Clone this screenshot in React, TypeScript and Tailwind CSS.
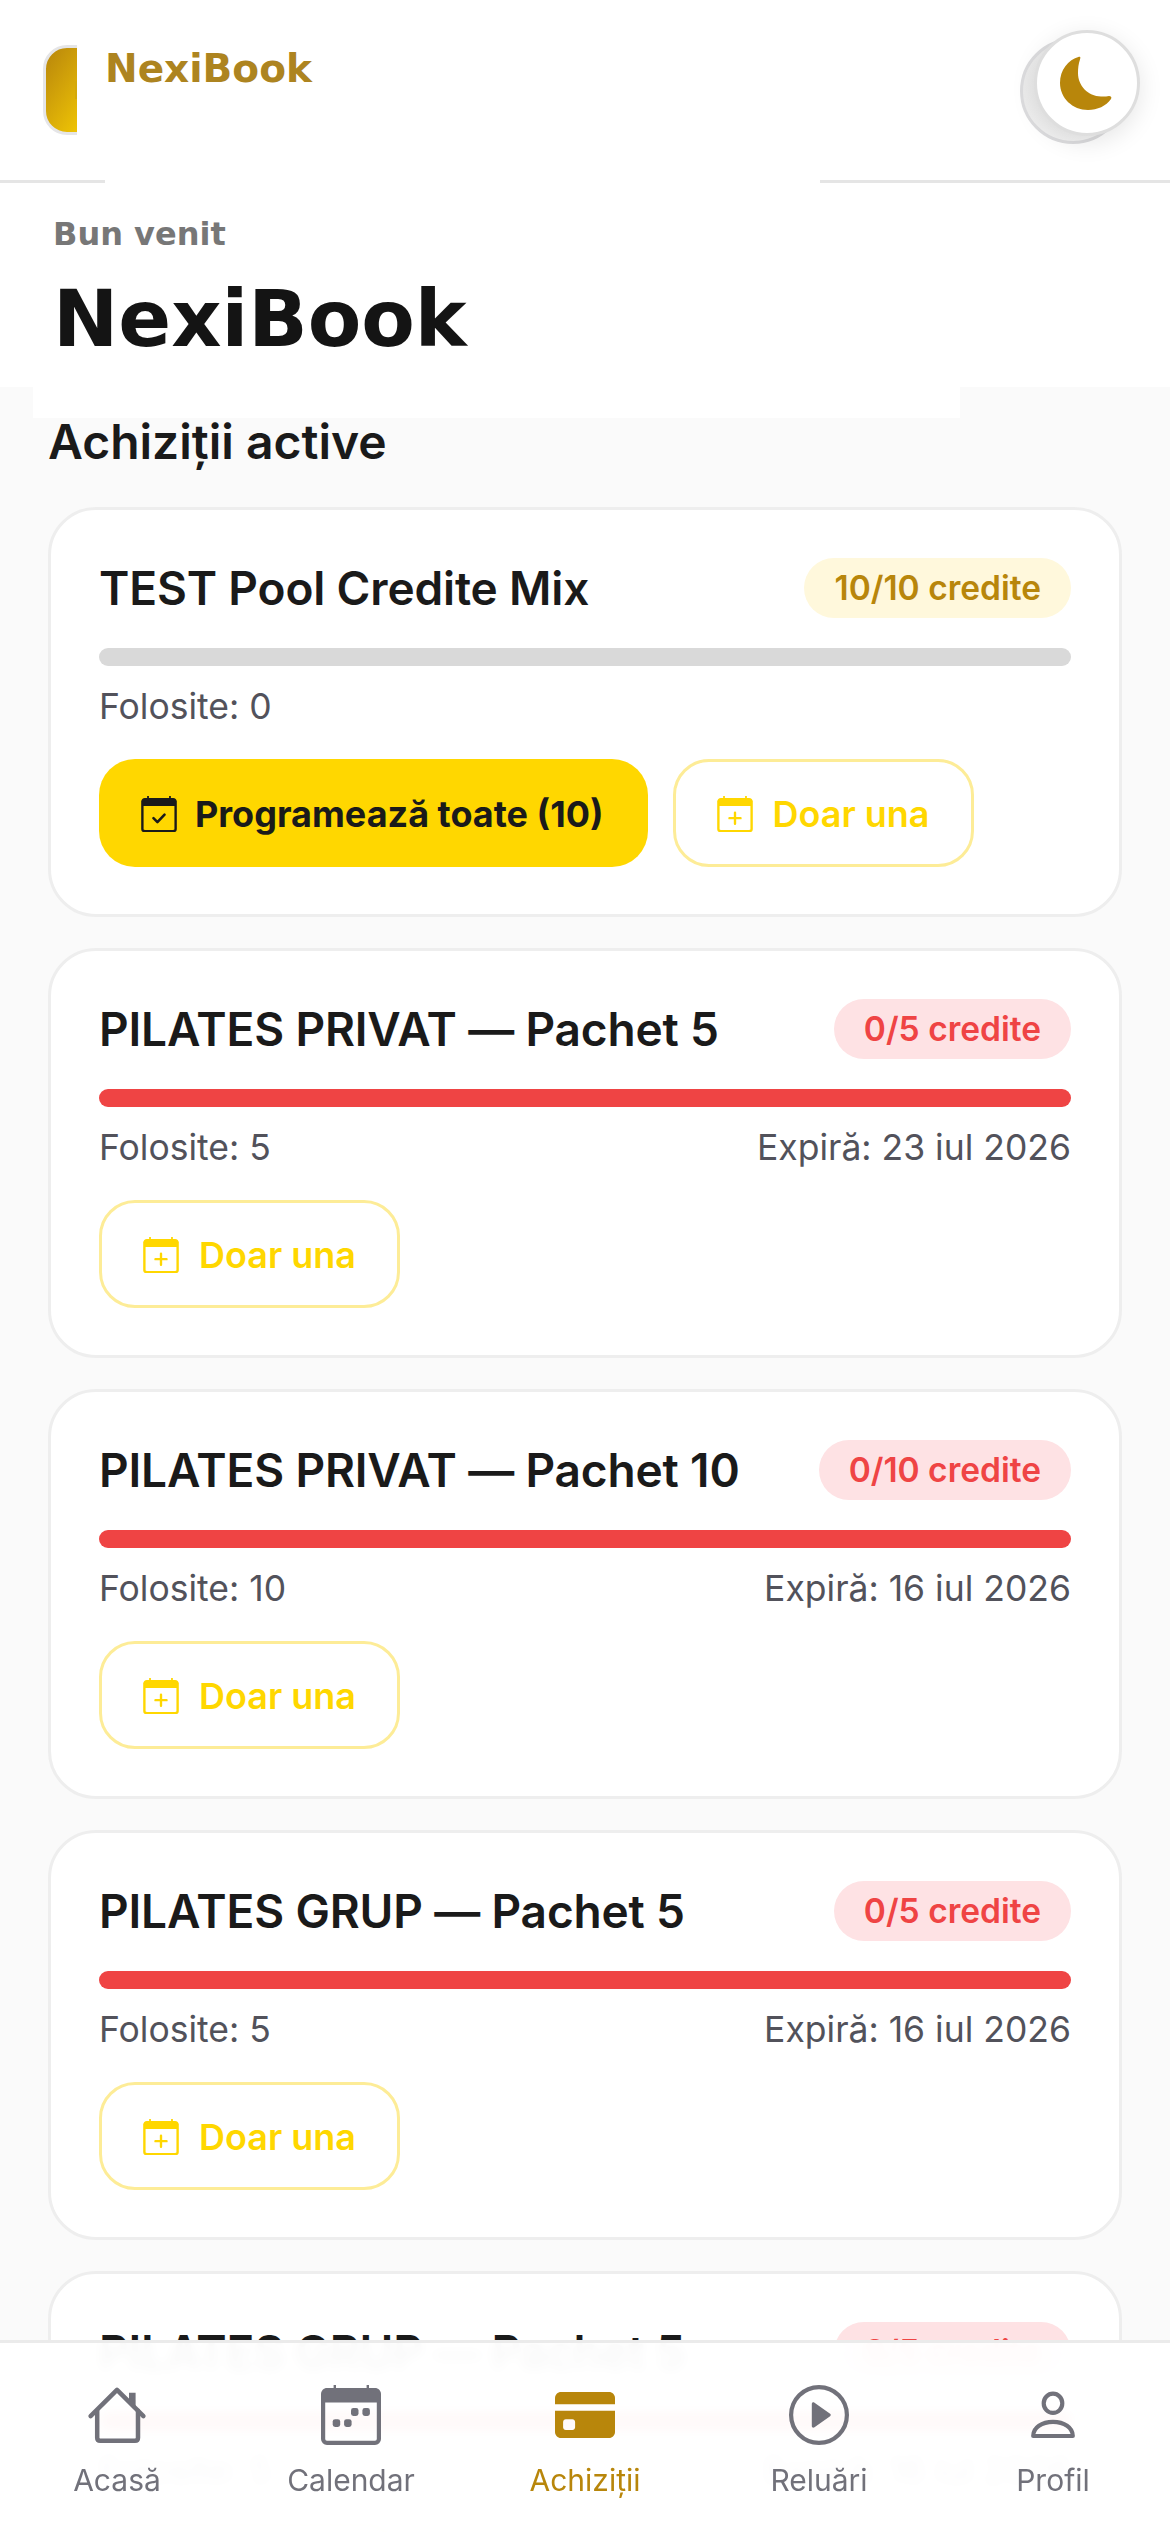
const packages = [
  { id: "pool", title: "TEST Pool Credite Mix", credits: "10/10 credite", used: 0, expires: null, bulk: true },
  { id: "priv5", title: "PILATES PRIVAT — Pachet 5", credits: "0/5 credite", used: 5, expires: "23 iul 2026", bulk: false },
  { id: "priv10", title: "PILATES PRIVAT — Pachet 10", credits: "0/10 credite", used: 10, expires: "16 iul 2026", bulk: false },
  { id: "grup5", title: "PILATES GRUP — Pachet 5", credits: "0/5 credite", used: 5, expires: "16 iul 2026", bulk: false },
  { id: "grup5b", title: "PILATES GRUP — Pachet 5", credits: "0/5 credite", used: 5, expires: "16 iul 2026", bulk: false },
];

function CalendarBase({ className, children }: { className: string; children: React.ReactNode }) {
  return (
    <svg viewBox="3 2.2 18 18.2" className={className} fill="currentColor">
      <path d="M6 2.2h.9V4H6zM17.1 2.2h.9V4h-.9z" />
      <path d="M3.600 7.200V19c0 .8.6 1 1.400 1h14c.8 0 1.400-.2 1.400-1V7.200" fill="none" stroke="currentColor" strokeWidth="1.200" />
      <path d="M4.800 3.200h14.400c.9 0 1.800.8 1.800 1.800v2.200H3V5c0-1 .9-1.800 1.800-1.800z" />
      {children}
    </svg>
  );
}

function CheckCalendar() {
  return (
    <CalendarBase className="h-[36px] w-[36px] text-[#1a1a1a]">
      <path d="M9.200 13.400l2 2 3.600-3.800" fill="none" stroke="currentColor" strokeWidth="1.300" strokeLinecap="round" strokeLinejoin="round" />
    </CalendarBase>
  );
}

function PlusCalendar() {
  return (
    <CalendarBase className="h-[36px] w-[36px] text-[#ffd700]">
      <path d="M12 10.600v5.600M9.200 13.400h5.600" fill="none" stroke="currentColor" strokeWidth="1.200" strokeLinecap="round" />
    </CalendarBase>
  );
}

function PackageCard({ pkg }: { pkg: (typeof packages)[number] }) {
  const empty = pkg.used > 0;
  return (
    <div className="rounded-[48px] border-[3px] border-[#eeeeee] bg-white px-[48px] pt-[48px] pb-[47px]">
      <div className="flex h-[60px] items-center justify-between">
        <h3 className="text-[46px] font-semibold tracking-[-0.15px] text-[#1a1a1a]">{pkg.title}</h3>
        <span
          className={
            empty
              ? "flex h-[60px] items-center rounded-full bg-[#fee2e4] px-[30px] text-[33.5px] font-semibold text-[#ef4444]"
              : "flex h-[60px] items-center rounded-full bg-[#fff8dc] px-[30px] text-[33.5px] font-semibold text-[#b8860b]"
          }
        >
          {pkg.credits}
        </span>
      </div>
      <div className={empty ? "mt-[30px] h-[18px] rounded-full bg-[#ef4444]" : "mt-[30px] h-[18px] rounded-full bg-[#d9d9d9]"} />
      <div className="mt-[12px] mb-[23px] flex h-[58px] items-center justify-between text-[35.5px] text-[#52525b]">
        <span>Folosite: {pkg.used}</span>
        {pkg.expires && <span>Expiră: {pkg.expires}</span>}
      </div>
      <div className="flex gap-[25px]">
        {pkg.bulk && (
          <button className="flex h-[108px] items-center gap-[18px] rounded-[36px] bg-[#ffd700] pl-[42px] pr-[44px] pt-[2px] text-[36px] font-bold text-[#1a1a1a]">
            <CheckCalendar />
            Programează toate (10)
          </button>
        )}
        <button className="flex h-[108px] items-center gap-[20px] rounded-[36px] border-[3px] border-[#fdec97] bg-white pl-[41px] pr-[41px] pt-[2px] text-[36px] font-semibold text-[#ffd700]">
          <PlusCalendar />
          Doar una
        </button>
      </div>
    </div>
  );
}

function HomeIcon() {
  return (
    <svg viewBox="0 0 24 24" className="h-[72px] w-[72px]" fill="none" stroke="currentColor" strokeWidth="1.5" strokeLinecap="round" strokeLinejoin="round">
      <path d="M3.200 12.400L12 3.600l8.800 8.800" />
      <path d="M5.400 10.600V19.600c0 .6.4 1 1 1h11.600c.6 0 1-.4 1-1V10.600" />
      <path d="M16 4.600h2.200v4.600L16 7z" fill="currentColor" stroke="none" />
    </svg>
  );
}

function CalendarIcon() {
  return (
    <svg viewBox="0 0 24 24" className="h-[72px] w-[72px]" fill="currentColor">
      <path d="M6.200 2h.8v2h-.8zM17.200 2h.8v2h-.8z" />
      <path d="M2.700 7v13c0 .8.6 1.300 1.300 1.300h16c.7 0 1.300-.5 1.300-1.300V7" fill="none" stroke="currentColor" strokeWidth="1.400" />
      <path d="M4 3h16c1.100 0 2 .9 2 2v2.800H2V5c0-1.100.9-2 2-2z" />
      <rect x="5.900" y="13.400" width="2.500" height="2.600" rx=".8" />
      <rect x="9.700" y="13.400" width="2.500" height="2.600" rx=".8" />
      <rect x="12" y="9.700" width="2.500" height="2.600" rx=".8" />
      <rect x="15.800" y="9.700" width="2.500" height="2.600" rx=".8" />
    </svg>
  );
}

function CardIcon() {
  return (
    <svg viewBox="0 0 24 24" className="h-[72px] w-[72px]" fill="currentColor">
      <path d="M4 4.300h16c1.100 0 2 .9 2 2v2.100H2V6.300c0-1.100.9-2 2-2z" />
      <path fillRule="evenodd" d="M2 10.600h20v7.100c0 1.100-.9 2-2 2H4c-1.100 0-2-.9-2-2v-7.100zM5.600 13.400c-.5 0-.9.4-.9.900v1.800c0 .5.4.9.9.9h2.200c.5 0 .9-.4.9-.9v-1.800c0-.5-.4-.9-.9-.9H5.600z" />
    </svg>
  );
}

function PlayIcon() {
  return (
    <svg viewBox="0 0 24 24" className="h-[72px] w-[72px]" fill="currentColor">
      <circle cx="12" cy="12" r="9.300" fill="none" stroke="currentColor" strokeWidth="1.400" />
      <path d="M9.600 8.300c0-.5.5-.7.9-.4l5.200 3.700c.3.200.3.600 0 .8l-5.200 3.700c-.4.300-.9.100-.9-.4z" />
    </svg>
  );
}

function PersonIcon() {
  return (
    <svg viewBox="0 0 24 24" className="h-[72px] w-[72px]" fill="none" stroke="currentColor" strokeWidth="1.400">
      <ellipse cx="12" cy="8.100" rx="3.100" ry="3.200" />
      <path d="M5.400 19c0-2.800 2.900-4.700 6.600-4.700s6.600 1.900 6.600 4.700z" strokeLinejoin="round" />
    </svg>
  );
}

const navItems = [
  { label: "Acasă", icon: <HomeIcon />, active: false },
  { label: "Calendar", icon: <CalendarIcon />, active: false },
  { label: "Achiziții", icon: <CardIcon />, active: true },
  { label: "Reluări", icon: <PlayIcon />, active: false },
  { label: "Profil", icon: <PersonIcon />, active: false },
];

export default function App() {
  return (
    <div className="h-[2532px] overflow-hidden bg-[#fafafa] font-['Inter',sans-serif]">
      <header className="flex h-[183px] border-b-[3px] border-[#e5e5e5] bg-white">
        <div className="relative mt-[45px] ml-[43px] h-[90px] w-[34px] overflow-hidden">
          <div className="h-[90px] w-[64px] rounded-[24px] border-[3px] border-[#e5e5e7] bg-gradient-to-br from-[#b8860b] to-[#ffd700]" />
          <div className="absolute top-[36px] right-0 h-[18px] w-[2px] bg-[#d4a90a]" />
        </div>
        <div className="ml-[28px] h-[183px] w-[715px] bg-white pt-[46px] font-['DejaVu_Sans',sans-serif] text-[39px] leading-[45px] font-bold text-[#ad8420]">
          NexiBook
        </div>
        <div className="relative mt-[30px] ml-[200px] h-[114px] w-[120px]">
          <div className="absolute bottom-0 left-0 h-[106px] w-[106px] rounded-full border-[3px] border-[#dcdcde] bg-gradient-to-br from-[#e8e8e8] to-[#f6f6f6]" />
          <button className="absolute top-0 right-0 flex h-[106px] w-[106px] items-center justify-center rounded-full border-[3px] border-[#dedede] bg-white shadow-[0_6px_24px_rgba(0,0,0,0.1)]">
            <svg viewBox="0 0 54 54" className="h-[54px] w-[54px] text-[#b8860b]" fill="currentColor">
              <path d="M19 .8C8 4 0 14 0 27c0 15 12.500 27 28 27 9.500 0 18-4 23-11 1-1.600 0-3-2-3-2.500.5-5 .6-8 .5C28 40 18 30 18 17c0-5 .5-9 2-13.500C20.700 1.300 20.500.4 19 .8z" />
            </svg>
          </button>
        </div>
      </header>

      <section className="h-[204px] bg-white">
        <div className="ml-[33px] h-[235px] w-[927px] bg-white pt-[32px] pl-[20px] font-['DejaVu_Sans',sans-serif] font-bold">
          <p className="text-[32px] leading-[38px] text-[#777777]">Bun venit</p>
          <h1 className="mt-[20px] text-[78px] leading-[92px] text-[#141414]">NexiBook</h1>
        </div>
      </section>

      <main className="px-[48px] pt-[25px]">
        <h2 className="mb-[35px] text-[48px] leading-[60px] font-semibold text-[#1a1a1a]">Achiziții active</h2>
        <div className="flex flex-col gap-[31px]">
          {packages.map((pkg) => (
            <PackageCard key={pkg.id} pkg={pkg} />
          ))}
        </div>
      </main>

      <nav className="fixed right-0 bottom-0 left-0 grid h-[192px] grid-cols-5 border-t-[3px] border-[#ebebeb] bg-white/[0.97] pt-[36px] backdrop-blur-[6px]">
        {navItems.map((item) => (
          <a
            key={item.label}
            className={item.active ? "flex flex-col items-center text-[#b8860b]" : "flex flex-col items-center text-[#71717a]"}
          >
            {item.icon}
            <span className="mt-[9px] text-[30px] leading-[40px]">{item.label}</span>
          </a>
        ))}
      </nav>
    </div>
  );
}
